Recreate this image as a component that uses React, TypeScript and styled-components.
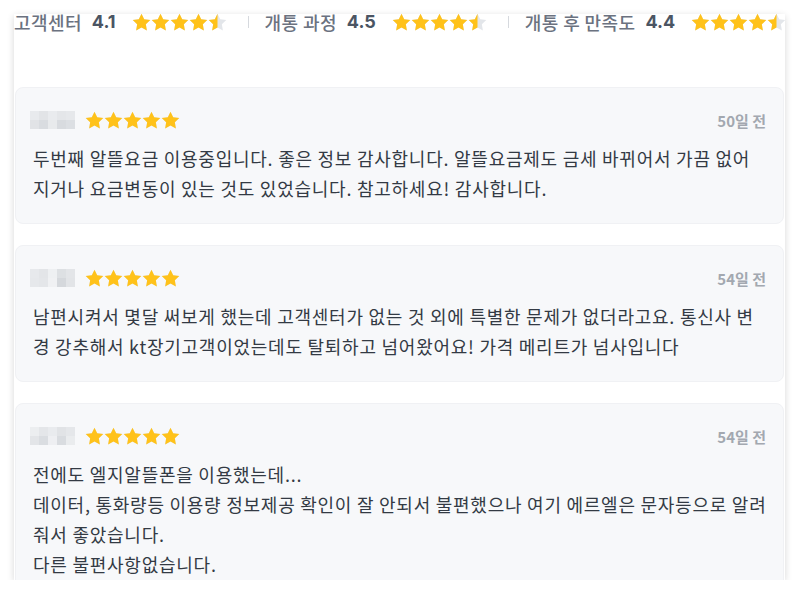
import React from 'react';
import styled, { createGlobalStyle } from 'styled-components';

const GlobalStyle = createGlobalStyle`
  html, body {
    margin: 0;
    padding: 0;
    background: #ffffff;
  }
  body {
    font-family: "Noto Sans CJK KR", "Noto Sans", sans-serif;
    color: #333a44;
  }
`;

const STAR = 'M12 0.8l3.4 7 7.7 1.1-5.6 5.4 1.3 7.7L12 18.4l-6.8 3.6 1.3-7.7-5.6-5.4 7.7-1.1z';

const Star = ({ fill, id, size }: { fill: number; id: string; size: number }) => (
  <svg width={size} height={size} viewBox="0 0 24 24">
    <defs>
      <clipPath id={id}>
        <rect x="0" y="0" width={24 * fill} height="24" />
      </clipPath>
    </defs>
    <path d={STAR} fill="#e3e6ea" />
    <path d={STAR} fill="#ffc21a" clipPath={`url(#${id})`} />
  </svg>
);

const Stars = ({ value, id, size = 19 }: { value: number; id: string; size?: number }) => (
  <StarRow>
    {[0, 1, 2, 3, 4].map((i) => {
      const f = Math.max(0, Math.min(1, value - i));
      return <Star key={i} fill={f} id={`${id}-${i}`} size={size} />;
    })}
  </StarRow>
);

const summary = [
  { label: '고객센터', score: '4.1', stars: 4.5 },
  { label: '개통 과정', score: '4.5', stars: 4.5 },
  { label: '개통 후 만족도', score: '4.4', stars: 4.5 },
];

const mosaics = [
  ['#e8eaed', '#e2e4e7', '#e9ebee', '#e4e6e9', '#e6e8eb', '#e1e3e6', '#d9dce0', '#e8eaec', '#d8dbdf', '#dcdfe3'],
  ['#e7e9ec', '#e3e5e8', '#eef0f2', '#dde0e3', '#e3e5e8', '#e6e8eb', '#e4e6e9', '#f0f1f3', '#d5d8dc', '#e2e4e7'],
  ['#eceef0', '#e4e6e9', '#e9ebee', '#e1e3e6', '#e5e7ea', '#e3e5e8', '#dadde1', '#eeeff2', '#d9dce0', '#eaecee'],
];

// lines as they wrap in the card width
const reviews = [
  {
    date: '50일 전',
    lines: [
      '두번째 알뜰요금 이용중입니다. 좋은 정보 감사합니다. 알뜰요금제도 금세 바뀌어서 가끔 없어',
      '지거나 요금변동이 있는 것도 있었습니다. 참고하세요! 감사합니다.',
    ],
  },
  {
    date: '54일 전',
    lines: [
      '남편시켜서 몇달 써보게 했는데 고객센터가 없는 것 외에 특별한 문제가 없더라고요. 통신사 변',
      '경 강추해서 kt장기고객이었는데도 탈퇴하고 넘어왔어요! 가격 메리트가 넘사입니다',
    ],
  },
  {
    date: '54일 전',
    lines: [
      '전에도 엘지알뜰폰을 이용했는데...',
      '데이터, 통화량등 이용량 정보제공 확인이 잘 안되서 불편했으나 여기 에르엘은 문자등으로 알려',
      '줘서 좋았습니다.',
      '다른 불편사항없습니다.',
    ],
  },
];

const App = () => (
  <>
    <GlobalStyle />
    <Page>
      <Panel>
        <Summary>
          {summary.map((s, i) => (
            <React.Fragment key={s.label}>
              {i > 0 && <Divider />}
              <SummaryItem>
                <SummaryLabel>{s.label}</SummaryLabel>
                <SummaryScore>{s.score}</SummaryScore>
                <Stars value={s.stars} id={`sum${i}`} />
              </SummaryItem>
            </React.Fragment>
          ))}
        </Summary>
        <List>
          {reviews.map((r, i) => (
            <Card key={i}>
              <CardHead>
                <Mosaic>
                  {mosaics[i].map((c, j) => (
                    <Tile key={j} $color={c} />
                  ))}
                </Mosaic>
                <Stars value={5} id={`rv${i}`} />
                <DateText>{r.date}</DateText>
              </CardHead>
              <Body>
                {r.lines.map((t, j) => (
                  <Line key={j}>{t}</Line>
                ))}
              </Body>
            </Card>
          ))}
        </List>
      </Panel>
    </Page>
  </>
);

export default App;

const Page = styled.div`
  padding: 14px 15px 0 14px;
`;

const Panel = styled.div`
  width: 771px;
  height: 566px;
  background: #ffffff;
  box-shadow: 0 2px 7px rgba(0, 0, 0, 0.16);
  display: flex;
  flex-direction: column;
`;

const Summary = styled.div`
  display: flex;
  align-items: center;
  height: 24px;
  margin-top: -4px;
  white-space: nowrap;
  overflow: hidden;
  flex-shrink: 0;
`;

const SummaryItem = styled.div`
  display: flex;
  align-items: center;
  flex-shrink: 0;
`;

const SummaryLabel = styled.span`
  font-size: 18px;
  line-height: 24px;
  letter-spacing: 0.4px;
  color: #6b7280;
  font-weight: 500;
`;

const SummaryScore = styled.span`
  font-family: "Inter", "Noto Sans CJK KR", sans-serif;
  font-size: 18px;
  line-height: 24px;
  font-weight: 700;
  color: #4b5563;
  margin: 0 16px 0 10px;
`;

const Divider = styled.span`
  width: 1px;
  height: 12px;
  background: #d6d9de;
  margin: 0 16px 0 21px;
  flex-shrink: 0;
`;

const StarRow = styled.span`
  display: inline-flex;
  flex-shrink: 0;
`;

const List = styled.div`
  flex: 1;
  min-height: 0;
  overflow: hidden;
  display: flex;
  flex-direction: column;
  gap: 21px;
  margin-top: 53px;
  padding: 0 1px;
`;

const Card = styled.div`
  flex-shrink: 0;
  background: #f7f8fa;
  border: 1px solid #f0f1f4;
  border-radius: 8px;
  padding: 22px 17px 20px 14px;
`;

const CardHead = styled.div`
  display: flex;
  align-items: center;
  gap: 10px;
  height: 20px;
`;

const Mosaic = styled.div`
  display: grid;
  grid-template-columns: repeat(5, 9px);
  grid-template-rows: repeat(2, 9px);
`;

const Tile = styled.span<{ $color: string }>`
  background: ${(p) => p.$color};
`;

const DateText = styled.span`
  margin-left: auto;
  font-size: 15px;
  font-weight: 700;
  color: #a3a8b0;
`;

const Body = styled.div`
  margin-top: 13px;
  padding-left: 3px;
  font-size: 18px;
  line-height: 30px;
  letter-spacing: 0.75px;
  color: #333a44;
`;

const Line = styled.div`
  white-space: nowrap;
`;
